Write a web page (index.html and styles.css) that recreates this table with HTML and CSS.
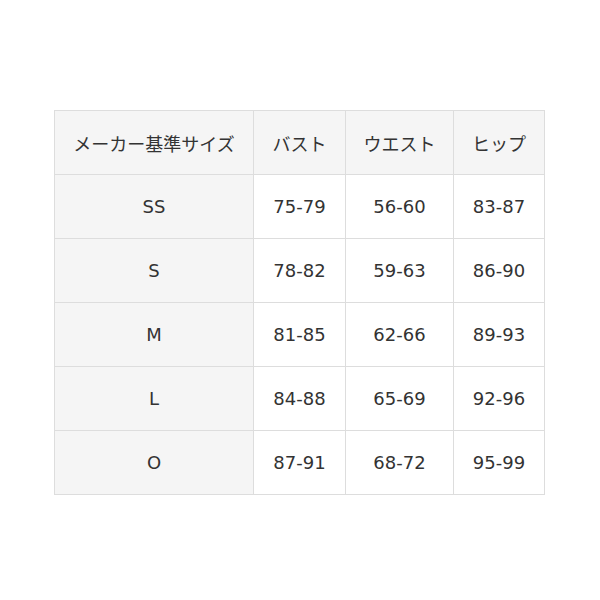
FILE: index.html
```html
<!DOCTYPE html>
<html lang="ja">
<head>
<meta charset="utf-8">
<link rel="stylesheet" href="styles.css">
</head>
<body>
<div class="wrap">
<table class="size">
<colgroup>
<col class="c1"><col class="c2"><col class="c3"><col class="c4">
</colgroup>
<thead>
<tr><th>メーカー基準サイズ</th><th>バスト</th><th>ウエスト</th><th>ヒップ</th></tr>
</thead>
<tbody>
<tr><th>SS</th><td>75-79</td><td>56-60</td><td>83-87</td></tr>
<tr><th>S</th><td>78-82</td><td>59-63</td><td>86-90</td></tr>
<tr><th>M</th><td>81-85</td><td>62-66</td><td>89-93</td></tr>
<tr><th>L</th><td>84-88</td><td>65-69</td><td>92-96</td></tr>
<tr><th>O</th><td>87-91</td><td>68-72</td><td>95-99</td></tr>
</tbody>
</table>
</div>
</body>
</html>
```
FILE: styles.css
```css
html, body {
  margin: 0;
  padding: 0;
  background: #fff;
}
.wrap {
  padding-top: 110px;
  padding-left: 54px;
}
.size {
  border-collapse: collapse;
  table-layout: fixed;
  width: 490px;
  font-family: "DejaVu Sans", "Noto Sans CJK JP", sans-serif;
  font-size: 18px;
  color: #333;
}
.c1 { width: 199px; }
.c2 { width: 92px; }
.c3 { width: 108px; }
.c4 { width: 91px; }
.size th, .size td {
  border: 1px solid #dddddd;
  height: 63px;
  padding: 0;
  text-align: center;
  vertical-align: middle;
  font-weight: normal;
}
.size thead th {
  background: #f5f5f5;
  font-family: "Noto Sans CJK JP", sans-serif;
}
.size tbody th {
  background: #f5f5f5;
}
.size td {
  background: #fff;
}
```
